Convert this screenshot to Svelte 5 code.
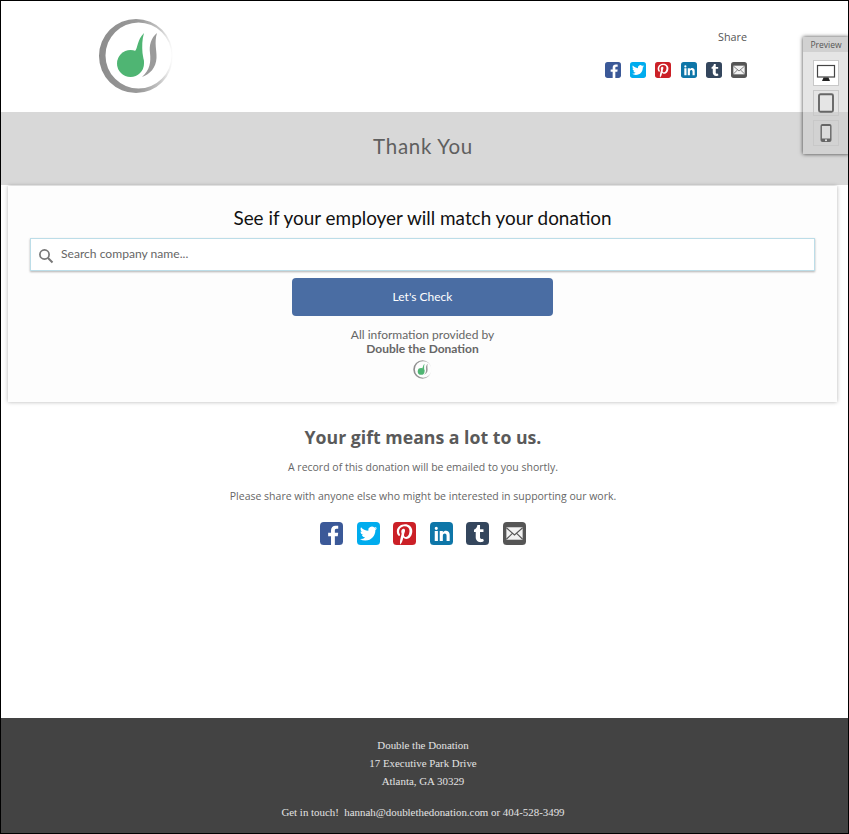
<script>
  const socials = [
    { key: 'facebook', color: '#3b5998' },
    { key: 'twitter', color: '#00acee' },
    { key: 'pinterest', color: '#cb2027' },
    { key: 'linkedin', color: '#0e76a8' },
    { key: 'tumblr', color: '#34465d' },
    { key: 'mail', color: '#555555' }
  ];
</script>

{#snippet logo(size)}
  <svg width={size} height={size} viewBox="0 0 76 76" aria-hidden="true">
    <defs>
      <linearGradient id="ring{size}" x1="0" y1="0" x2="1" y2="0">
        <stop offset="0" stop-color="#8c8c8c" />
        <stop offset="0.55" stop-color="#9a9a9a" />
        <stop offset="0.82" stop-color="#c4c4c4" />
        <stop offset="0.95" stop-color="#f0f0f0" />
        <stop offset="1" stop-color="#ffffff" />
      </linearGradient>
    </defs>
    <path fill="url(#ring{size})" fill-rule="evenodd" d="M1 38a37 37 0 1 0 74 0a37 37 0 1 0-74 0zM7.500 37.500a33 33 0 1 0 66 0a33 33 0 1 0-66 0z" />
    <circle cx="32.500" cy="45.500" r="13.500" fill="#4fb573" />
    <path fill="#4fb573" d="M37 33c3-3 2-11 9-18-2 7-2 13-1.500 20 .5 4 1.500 7 1.500 11z" />
    <path fill="#9a9a9a" d="M59 15c-6 5-8 12-7 20 1 9 0 17-8 24 8-3 14-9 14.500-19 .4-8-2.500-15 .5-25z" />
  </svg>
{/snippet}

{#snippet social(key, color, size)}
  <svg class="social" width={size} height={size} viewBox="0 0 24 24" aria-hidden="true">
    <rect width="24" height="24" rx="4" fill={color} />
    {#if key === 'facebook'}
      <path fill="#fff" d="M15.500 24v-9.200h3l.5-3.600h-3.500V8.900c0-1 .3-1.800 1.800-1.800H19V3.900c-.4 0-1.500-.1-2.800-.1-2.800 0-4.700 1.700-4.700 4.800v2.600H8.500v3.600h3V24z" />
    {:else if key === 'twitter'}
      <g transform="translate(3 3) scale(.75)">
        <path fill="#fff" d="M23.953 4.570a10 10 0 01-2.825.775 4.958 4.958 0 002.163-2.723c-.951.555-2.005.959-3.127 1.184a4.920 4.920 0 00-8.384 4.482C7.690 8.095 4.067 6.130 1.640 3.162a4.822 4.822 0 00-.666 2.475c0 1.710.870 3.213 2.188 4.096a4.904 4.904 0 01-2.228-.616v.060a4.923 4.923 0 003.946 4.827 4.996 4.996 0 01-2.212.085 4.936 4.936 0 004.604 3.417 9.867 9.867 0 01-6.102 2.105c-.390 0-.779-.023-1.170-.067a13.995 13.995 0 007.557 2.209c9.053 0 13.998-7.496 13.998-13.985 0-.210 0-.420-.015-.630A9.935 9.935 0 0024 4.590z" />
      </g>
    {:else if key === 'pinterest'}
      <g transform="translate(4 2.200) scale(.042)">
        <path fill="#fff" d="M204 6.500C101.400 6.500 0 74.900 0 185.600 0 256 39.600 296 63.600 296c9.900 0 15.600-27.600 15.600-35.400 0-9.300-23.700-29.100-23.700-67.800 0-80.400 61.200-137.400 140.400-137.400 68.100 0 118.500 38.700 118.500 109.800 0 53.100-21.300 152.700-90.300 152.700-24.900 0-46.200-18-46.200-43.800 0-37.800 26.400-74.400 26.400-113.400 0-66.200-93.900-54.200-93.900 25.800 0 16.800 2.100 35.400 9.600 50.700-13.800 59.400-42 147.900-42 209.100 0 18.900 2.700 37.500 4.500 56.400 3.400 3.800 1.700 3.400 6.900 1.500 50.400-69 48.600-82.500 71.400-172.800 12.300 23.400 44.100 36 69.300 36 106.200 0 153.900-103.500 153.900-196.800C384 71.300 298.200 6.500 204 6.500z" />
      </g>
    {:else if key === 'linkedin'}
      <g transform="translate(2.500 2.500) scale(.82)">
        <path fill="#fff" d="M6.940 5a2 2 0 1 1-4-.002 2 2 0 0 1 4 .002zM7 8.480H3V21h4V8.480zm6.320 0H9.340V21h3.940v-6.570c0-3.660 4.770-4 4.770 0V21H22v-7.930c0-6.170-7.060-5.940-8.720-2.910l.040-1.680z" />
      </g>
    {:else if key === 'tumblr'}
      <g transform="translate(4.500 3) scale(.75)">
        <path fill="#fff" d="M14.563 24c-5.093 0-7.031-3.756-7.031-6.411V9.747H5.116V6.648c3.630-1.313 4.512-4.596 4.710-6.469C9.840.051 9.941 0 9.999 0h3.517v6.114h4.801v3.633h-4.820v7.470c.016 1.001.375 2.371 2.207 2.371h.090c.631-.020 1.486-.205 1.936-.419l1.156 3.425c-.436.636-2.400 1.374-4.156 1.404h-.178l.011.002z" />
      </g>
    {:else}
      <rect x="3.500" y="5.500" width="17" height="13" fill="#f2f2f2" />
      <path fill="none" stroke="#555" stroke-width="1.100" d="M3.500 6l8.500 7.500L20.500 6M3.500 18l6.500-6.300M20.500 18L14 11.700" />
    {/if}
  </svg>
{/snippet}

<div class="page">
  <header class="top">
    <div class="brand">{@render logo(76)}</div>
    <div class="share">
      <span class="share-label">Share</span>
      <div class="icons small">
        {#each socials as s}
          {@render social(s.key, s.color, 16)}
        {/each}
      </div>
    </div>
  </header>

  <div class="banner"><h1>Thank You</h1></div>

  <section class="card">
    <h2>See if your employer will match your donation</h2>
    <div class="search">
      <svg width="16" height="16" viewBox="0 0 16 16" aria-hidden="true">
        <circle cx="6.500" cy="6.500" r="4.600" fill="none" stroke="#777" stroke-width="1.700" />
        <path d="M10 10l4.500 4.500" stroke="#777" stroke-width="2" />
      </svg>
      <span>Search company name...</span>
    </div>
    <button class="check">Let's Check</button>
    <p class="provided">All information provided by<br /><strong>Double the Donation</strong></p>
    <div class="mini">{@render logo(19)}</div>
  </section>

  <main class="thanks">
    <h3>Your gift means a lot to us.</h3>
    <p>A record of this donation will be emailed to you shortly.</p>
    <p>Please share with anyone else who might be interested in supporting our work.</p>
    <div class="icons large">
      {#each socials as s}
        {@render social(s.key, s.color, 23)}
      {/each}
    </div>
  </main>

  <footer class="foot">
    <p>Double the Donation</p>
    <p>17 Executive Park Drive</p>
    <p>Atlanta, GA 30329</p>
    <p class="touch">Get in touch!&nbsp; hannah@doublethedonation.com or 404-528-3499</p>
  </footer>

  <aside class="preview">
    <div class="preview-title">Preview</div>
    <div class="devices">
      <div class="device active">
        <svg width="20" height="20" viewBox="0 0 20 20" aria-hidden="true">
          <rect x="1.500" y="2.500" width="17" height="11.500" fill="none" stroke="#444" stroke-width="1.200" />
          <path fill="#222" d="M7.500 14.500h5l1.500 3.500H6z" />
        </svg>
      </div>
      <div class="device">
        <svg width="20" height="20" viewBox="0 0 20 20" aria-hidden="true">
          <rect x="3" y="1.200" width="14" height="17.600" rx="1.500" fill="none" stroke="#666" stroke-width="1.900" />
        </svg>
      </div>
      <div class="device">
        <svg width="20" height="20" viewBox="0 0 20 20" aria-hidden="true">
          <rect x="4.500" y="1" width="11" height="18" rx="2" fill="#666" />
          <rect x="5.900" y="3" width="8.200" height="12.500" fill="#dcdcdc" />
          <circle cx="10" cy="17.300" r="1" fill="#eee" />
        </svg>
      </div>
    </div>
  </aside>
</div>

<style>
  :global(body) {
    margin: 0;
    background: #fff;
  }
  .page {
    position: relative;
    box-sizing: border-box;
    width: 849px;
    height: 834px;
    border: 1px solid #000;
    display: flex;
    flex-direction: column;
    overflow: hidden;
    font-family: "Open Sans", sans-serif;
    color: #555;
  }
  .top {
    height: 111px;
    display: flex;
    justify-content: space-between;
    flex-shrink: 0;
  }
  .brand {
    padding: 17px 0 0 97px;
  }
  .brand svg,
  .mini svg {
    display: block;
  }
  .share {
    display: flex;
    flex-direction: column;
    align-items: flex-end;
    padding: 28px 101px 0 0;
  }
  .share-label {
    font-size: 10.800px;
    line-height: 15px;
    color: #555;
  }
  .icons {
    display: flex;
  }
  .icons.small {
    gap: 9.200px;
    margin-top: 18px;
  }
  .icons.large {
    gap: 13.500px;
    justify-content: center;
    margin-top: 18px;
  }
  .social {
    display: block;
    flex-shrink: 0;
  }
  .banner {
    box-sizing: border-box;
    height: 73px;
    flex-shrink: 0;
    padding: 0 3px 6px 0;
    background: #d8d8d8;
    display: flex;
    align-items: center;
    justify-content: center;
  }
  h1 {
    margin: 0;
    font-family: Lato, sans-serif;
    font-weight: 400;
    font-size: 20.500px;
    letter-spacing: 0.7px;
    color: #5f5f5f;
  }
  .card {
    box-sizing: border-box;
    flex-shrink: 0;
    height: 216px;
    margin: 1px 11px 0 7px;
    padding: 20px 22px 0;
    background: #fdfdfd;
    box-shadow: 0 0 4px rgba(0, 0, 0, 0.3);
    display: flex;
    flex-direction: column;
    align-items: center;
    font-family: Lato, sans-serif;
  }
  h2 {
    margin: 0 0 8px;
    font-weight: 400;
    font-size: 18.900px;
    line-height: 24px;
    color: #111;
  }
  .search {
    box-sizing: border-box;
    width: 785px;
    height: 33px;
    display: flex;
    align-items: center;
    gap: 7px;
    padding-left: 7px;
    background: #fff;
    border: 1px solid #bcdde8;
    box-shadow: 0 1px 2px rgba(0, 0, 0, 0.3);
    font-size: 12.100px;
    color: #666;
  }
  .search svg {
    margin-top: 2px;
  }
  .search span {
    margin-top: -3px;
  }
  .check {
    width: 261px;
    height: 38px;
    margin-top: 7px;
    padding: 0 0 2px;
    border: 0;
    border-radius: 4px;
    background: #4a6da3;
    color: #fff;
    font-family: Lato, sans-serif;
    font-size: 12px;
    font-weight: 400;
  }
  .provided {
    margin: 12px 0 0;
    font-size: 12px;
    line-height: 14px;
    text-align: center;
    color: #666;
  }
  .provided strong {
    font-weight: 700;
  }
  .mini {
    margin-top: 4px;
  }
  .thanks {
    flex: 1;
    display: flex;
    flex-direction: column;
    align-items: center;
    padding: 22px 3px 0 0;
  }
  h3 {
    margin: 0 0 10px;
    font-size: 17.700px;
    line-height: 26px;
    font-weight: 700;
    color: #5a5a5a;
  }
  .thanks p {
    margin: 0 0 14px;
    font-size: 10.500px;
    line-height: 15px;
    color: #666;
  }
  .thanks p:last-of-type {
    margin-bottom: 0;
  }
  .foot {
    flex-shrink: 0;
    box-sizing: border-box;
    height: 115px;
    padding: 18px 3px 0 0;
    background: #434343;
    color: #e4e4e4;
    font-family: "Liberation Serif", serif;
    font-size: 10.900px;
    text-align: center;
  }
  .foot p {
    margin: 0;
    line-height: 18px;
  }
  .foot .touch {
    margin-top: 13px;
  }
  .preview {
    position: absolute;
    left: 802px;
    top: 36px;
    width: 46px;
    height: 117px;
    background: rgba(204, 204, 204, 0.5);
    box-shadow: 0 0 4px rgba(0, 0, 0, 0.75);
  }
  .preview-title {
    height: 15px;
    background: rgba(190, 190, 190, 0.5);
    font-size: 8.500px;
    line-height: 16px;
    text-align: center;
    color: #555;
  }
  .devices {
    display: flex;
    flex-direction: column;
    gap: 4px;
    padding: 8px 0 0 10px;
  }
  .device {
    box-sizing: border-box;
    width: 26px;
    height: 26px;
    border: 1px solid #c8c8c8;
    display: flex;
    align-items: center;
    justify-content: center;
  }
  .device.active {
    background: #fff;
  }
</style>
